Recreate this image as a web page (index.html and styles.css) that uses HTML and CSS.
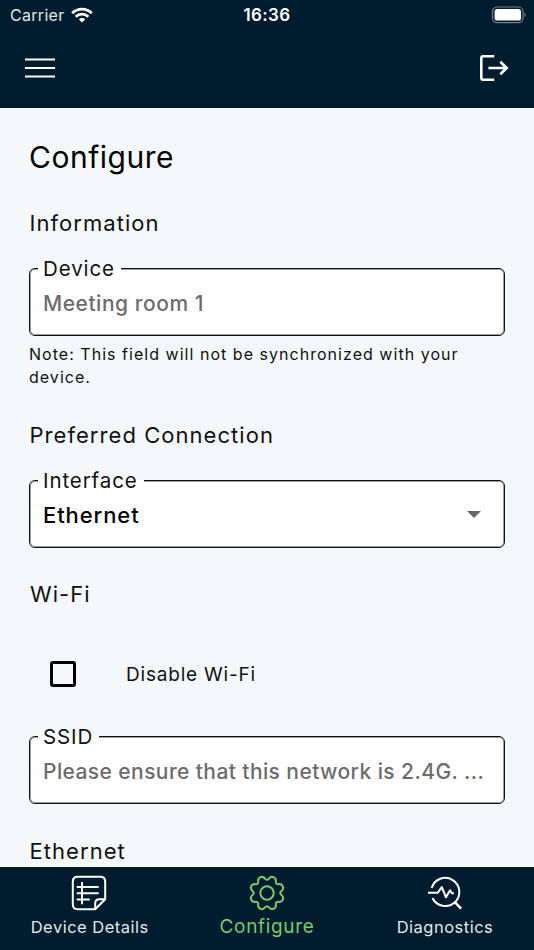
FILE: index.html
```html
<!DOCTYPE html>
<html lang="en">
<head>
<meta charset="utf-8">
<title>Configure</title>
<link rel="stylesheet" href="styles.css">
</head>
<body>
<div class="screen">
  <header class="top">
    <div class="status">
      <div class="carrier">
        <span class="carrier-name">Carrier</span>
        <svg width="22" height="16" viewBox="0 0 22 16" fill="none" stroke="#fff" stroke-width="2.9">
          <path d="M1.2 6.2C6.6 .7 15.4 .7 20.8 6.2"/>
          <path d="M4.7 9.7c3.5-3.5 9.1-3.5 12.6 0"/>
          <path d="M11 15.6l-3.2-3.3c1.8-1.7 4.6-1.7 6.4 0z" fill="#fff" stroke="none"/>
        </svg>
      </div>
      <span class="time">16:36</span>
      <svg class="battery" width="36" height="18" viewBox="0 0 36 18">
        <rect x="1.5" y="1" width="30.5" height="15.6" rx="4.6" fill="none" stroke="#74808a" stroke-width="1.2"/>
        <rect x="3.6" y="3" width="26.4" height="11.6" rx="2.6" fill="#fff"/>
        <path d="M33.5 6.5c1.6.6 1.6 4 0 4.6z" fill="#74808a"/>
      </svg>
    </div>
    <div class="appbar">
      <svg width="30" height="22" viewBox="0 0 30 22" stroke="#fff" stroke-width="2">
        <path d="M0 2.4h30M0 11h30M0 19.6h30"/>
      </svg>
      <svg width="30" height="28" viewBox="0 0 30 28" fill="none" stroke="#fff" stroke-width="2.6">
        <path d="M15.2 2.3H4.3Q2.3 2.3 2.3 4.3v19.4q0 2 2 2h10.9"/>
        <path d="M9.4 14H28M21.3 7.8l6.4 6.2-6.4 6.2"/>
      </svg>
    </div>
  </header>

  <main class="content">
    <h1>Configure</h1>
    <h2>Information</h2>
    <fieldset class="field">
      <legend>Device</legend>
      <div class="value hint room">Meeting room 1</div>
    </fieldset>
    <p class="note">Note: This field will not be synchronized with your<br>device.</p>
    <h2>Preferred Connection</h2>
    <fieldset class="field">
      <legend>Interface</legend>
      <div class="value picked">
        <span>Ethernet</span>
        <svg width="14" height="7" viewBox="0 0 14 7"><path d="M0 0h14L7 7z" fill="#666"/></svg>
      </div>
    </fieldset>
    <h2 class="wifi">Wi-Fi</h2>
    <label class="check"><span class="box"></span><span>Disable Wi-Fi</span></label>
    <fieldset class="field ssid">
      <legend>SSID</legend>
      <div class="value hint">Please ensure that this network is 2.4G. ...</div>
    </fieldset>
    <h2 class="ethernet">Ethernet</h2>
  </main>

  <nav class="tabs">
    <div class="tab">
      <svg width="36" height="36" viewBox="-18 -18 36 36" fill="none" stroke="#fff" stroke-width="2" stroke-linejoin="round" stroke-linecap="round">
        <path d="M6.2 16.2H-11.3Q-16.2 16.2-16.2 11.3V-11.3Q-16.2-16.2-11.3-16.2H11.3Q16.2-16.2 16.2-11.3V6.2L6.2 16.2V10.5Q6.2 6.2 10.5 6.2H16.2"/>
        <path d="M-11.5-6H9M-11.5.3H9M-11.5 6.5H0M-7-10.4V10.5" stroke-width="1.9"/>
      </svg>
      <span class="details">Device Details</span>
    </div>
    <div class="tab active">
      <svg width="36" height="36" viewBox="-18 -18 36 36" fill="none" stroke="#78ca6c" stroke-width="2">
        <path d="M1.95-14.45Q3.9-16.9 6.55-15.8Q9.2-14.7 8.85-11.6Q8.5-8.5 11.6-8.85Q14.7-9.2 15.8-6.55Q16.9-3.9 14.45-1.95Q12 0 14.45 1.95Q16.9 3.9 15.8 6.55Q14.7 9.2 11.6 8.85Q8.5 8.5 8.85 11.6Q9.2 14.7 6.55 15.8Q3.9 16.9 1.95 14.45Q0 12-1.95 14.45Q-3.9 16.9-6.55 15.8Q-9.2 14.7-8.85 11.6Q-8.5 8.5-11.6 8.85Q-14.7 9.2-15.8 6.55Q-16.9 3.9-14.45 1.95Q-12 0-14.45-1.95Q-16.9-3.9-15.8-6.55Q-14.7-9.2-11.6-8.85Q-8.5-8.5-8.85-11.6Q-9.2-14.7-6.55-15.8Q-3.9-16.9-1.95-14.45Q0-12 1.95-14.45Z"/>
        <circle r="6.7"/>
      </svg>
      <span>Configure</span>
    </div>
    <div class="tab">
      <svg width="36" height="36" viewBox="-18 -18 36 36" fill="none" stroke="#fff" stroke-width="2" stroke-linejoin="round">
        <path d="M-13.3-5A14.1 14.1 0 1 1-12.5 5"/>
        <path d="M-17-.3h9.8l4-5.6 4.2 10.2 4-7 1.9 2.9h2"/>
        <path d="M9.5 8.8l6.6 6.8" stroke-width="2.5"/>
      </svg>
      <span>Diagnostics</span>
    </div>
  </nav>
</div>
</body>
</html>
```
FILE: styles.css
```css
* { box-sizing: border-box; }
body {
  margin: 0;
  font-family: Inter, "Liberation Sans", sans-serif;
  color: #111;
}
svg { display: block; flex: none; }
.screen {
  height: 950px;
  display: flex;
  flex-direction: column;
  background: #f4f8fb;
  overflow: hidden;
}
.top {
  height: 108px;
  flex: none;
  background: #001c2e;
  color: #fff;
}
.status {
  height: 30px;
  display: grid;
  grid-template-columns: 1fr auto 1fr;
  align-items: center;
  padding: 0 7px 0 10px;
  line-height: 20px;
}
.carrier { display: flex; align-items: center; gap: 6px; color: #e4e8ea; }
.carrier-name { font-size: 16px; letter-spacing: 0.3px; }
.time { font-size: 17px; font-weight: 600; letter-spacing: 0.4px; margin-right: 3px; }
.battery { justify-self: end; }
.appbar {
  height: 76px;
  display: flex;
  align-items: center;
  justify-content: space-between;
  padding: 0 25px;
}
.content {
  flex: 1;
  min-height: 0;
  overflow: hidden;
  padding: 29px 29px 0;
}
h1, h2, p { margin: 0; font-weight: 400; white-space: nowrap; }
h1 { font-size: 30px; line-height: 40px; letter-spacing: 0.5px; color: #000; }
h2 {
  margin-top: 32px;
  padding-left: 0.5px;
  font-size: 22px;
  line-height: 28px;
  letter-spacing: 1.05px;
}
.wifi { padding-left: 1px; }
.field {
  height: 80px;
  margin: 19px 0 0;
  padding: 0 0 0 8px;
  min-width: 0;
  border: 1px solid #111;
  border-radius: 6px;
  background: #fff;
  box-shadow: inset 0 0 0 1px rgba(17, 17, 17, 0.4);
}
legend {
  padding: 2px 6px 0 5px;
  font-size: 20.5px;
  line-height: 22px;
  letter-spacing: 0.9px;
  background: linear-gradient(#f4f8fb 50%, #fff 50%);
}
.value {
  padding: 10px 0 0 5px;
  font-size: 21px;
  line-height: 28px;
  white-space: nowrap;
}
.hint { color: #6c6c6c; font-weight: 450; letter-spacing: 0.41px; }
.room { letter-spacing: 0.53px; }
.picked {
  display: flex;
  align-items: center;
  justify-content: space-between;
  padding-top: 8.5px;
  padding-right: 23px;
  font-size: 22px;
  font-weight: 500;
  letter-spacing: 0.9px;
  color: #000;
}
.note {
  margin-top: 7px;
  font-size: 16px;
  line-height: 23px;
  letter-spacing: 1.03px;
}
.check {
  height: 26px;
  margin-top: 53px;
  padding-left: 21px;
  display: flex;
  align-items: center;
  gap: 50px;
  font-size: 19px;
  letter-spacing: 0.8px;
}
.box {
  width: 26px;
  height: 26px;
  border: 3px solid #000;
  border-radius: 3px;
}
.ssid { margin-top: 37px; }
.ethernet { margin-top: 33px; }
.tabs {
  height: 83px;
  flex: none;
  background: #001c2e;
  display: grid;
  grid-template-columns: repeat(3, 1fr);
}
.tab {
  padding-top: 8px;
  display: flex;
  flex-direction: column;
  align-items: center;
  color: #e4e8ea;
  font-size: 16.5px;
  line-height: 24px;
  letter-spacing: 0.5px;
  gap: 4px;
  white-space: nowrap;
}
.details { padding-left: 1.5px; }
.active { color: #78ca6c; font-size: 19px; letter-spacing: 0.65px; }
```
